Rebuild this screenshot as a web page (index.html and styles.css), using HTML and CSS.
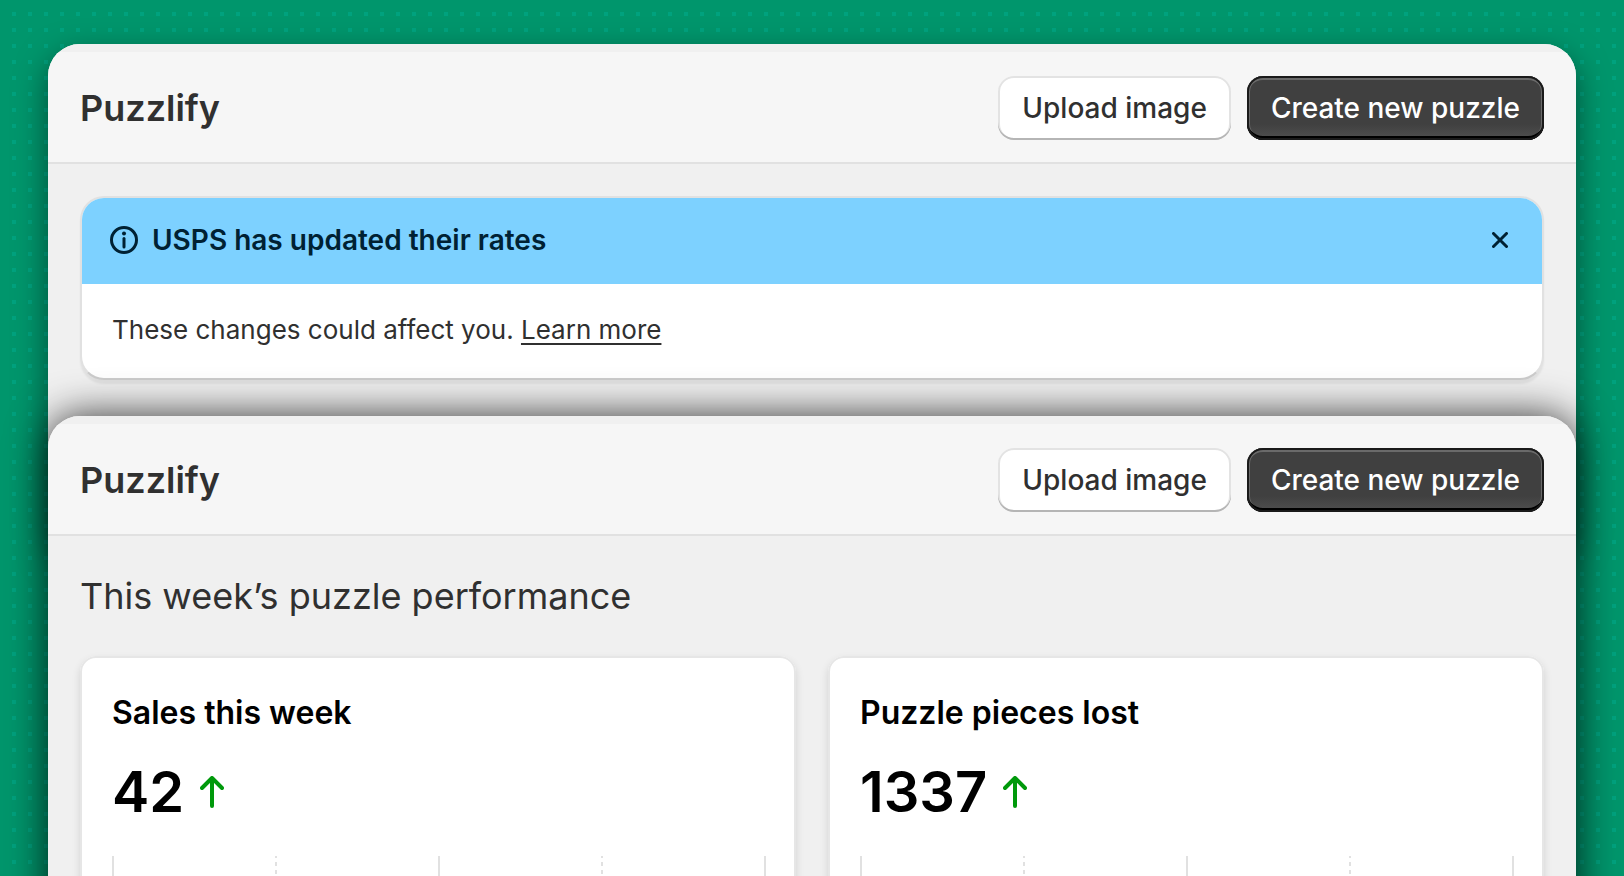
FILE: index.html
```html
<!DOCTYPE html>
<html lang="en">
<head>
  <meta charset="UTF-8" />
  <meta name="viewport" content="width=device-width, initial-scale=1.0" />
  <title>Puzzlify</title>
  <link rel="stylesheet" href="styles.css">
</head>
<body>
  <div class="stage">

    <!-- Window with the banner -->
    <section class="window window-back">
      <header class="title-bar">
        <h1>Puzzlify</h1>
        <div class="actions">
          <button type="button" class="btn">Upload image</button>
          <button type="button" class="btn btn-primary">Create new puzzle</button>
        </div>
      </header>
      <div class="content">
        <div class="banner">
          <div class="banner-head">
            <svg class="banner-icon" viewBox="0 0 28 28" aria-hidden="true">
              <circle cx="14" cy="14" r="12.5" fill="none" stroke="currentColor" stroke-width="3" />
              <path d="M14 12.500v8.500" fill="none" stroke="currentColor" stroke-width="3" stroke-linecap="round" />
              <circle cx="14" cy="7.500" r="2" fill="currentColor" />
            </svg>
            <h2>USPS has updated their rates</h2>
            <button type="button" class="banner-close" aria-label="Dismiss">
              <svg viewBox="0 0 16 16" aria-hidden="true">
                <path d="M1.500 1.500l13 13M14.500 1.500l-13 13" fill="none" stroke="currentColor" stroke-width="3" stroke-linecap="round" />
              </svg>
            </button>
          </div>
          <p class="banner-text">These changes could affect you. <a href="#">Learn more</a></p>
        </div>
      </div>
    </section>

    <!-- Window with the stats -->
    <section class="window window-front">
      <header class="title-bar">
        <h1>Puzzlify</h1>
        <div class="actions">
          <button type="button" class="btn">Upload image</button>
          <button type="button" class="btn btn-primary">Create new puzzle</button>
        </div>
      </header>
      <div class="content">
        <h2 class="section-title">This week’s puzzle performance</h2>
        <div class="cards">
          <article class="card">
            <h3>Sales this week</h3>
            <div class="stat">
              <span>42</span>
              <svg class="arrow" viewBox="0 0 24 32" aria-hidden="true">
                <path d="M12 30V3M2 12L12 2l10 10" fill="none" stroke="currentColor" stroke-width="4" stroke-linecap="round" stroke-linejoin="round" />
              </svg>
            </div>
            <svg class="chart" aria-hidden="true">
              <line x1="0" y1="0" x2="0" y2="100%" />
              <line class="dashed" x1="25%" y1="0" x2="25%" y2="100%" />
              <line x1="50%" y1="0" x2="50%" y2="100%" />
              <line class="dashed" x1="75%" y1="0" x2="75%" y2="100%" />
              <line x1="100%" y1="0" x2="100%" y2="100%" />
            </svg>
          </article>
          <article class="card">
            <h3>Puzzle pieces lost</h3>
            <div class="stat">
              <span>1337</span>
              <svg class="arrow" viewBox="0 0 24 32" aria-hidden="true">
                <path d="M12 30V3M2 12L12 2l10 10" fill="none" stroke="currentColor" stroke-width="4" stroke-linecap="round" stroke-linejoin="round" />
              </svg>
            </div>
            <svg class="chart" aria-hidden="true">
              <line x1="0" y1="0" x2="0" y2="100%" />
              <line class="dashed" x1="25%" y1="0" x2="25%" y2="100%" />
              <line x1="50%" y1="0" x2="50%" y2="100%" />
              <line class="dashed" x1="75%" y1="0" x2="75%" y2="100%" />
              <line x1="100%" y1="0" x2="100%" y2="100%" />
            </svg>
          </article>
        </div>
      </div>
    </section>

  </div>
</body>
</html>
```
FILE: styles.css
```css
* {
  box-sizing: border-box;
}
body {
  margin: 0;
  font-family: Inter, "Liberation Sans", sans-serif;
  color: #303030;
  background-color: #00966c;
  /* dotted backdrop */
  background-image: conic-gradient(from 270deg at 4px 4px, #00a27e 90deg, transparent 0);
  background-size: 16px 16px;
  background-position: 12px 12px;
}
h1, h2, h3, p {
  margin: 0;
}
.stage {
  height: 100vh;
  padding: 44px 48px 0;
  overflow: hidden;
}
.window {
  background: #f0f0f0;
  border-radius: 32px;
}
.window-back {
  padding-bottom: 140px;
  box-shadow: 0 12px 32px rgba(0, 0, 0, 0.5);
}
.window-front {
  position: relative;
  margin-top: -136px;
  box-shadow: 0 0 40px rgba(0, 0, 0, 0.8);
}
.title-bar {
  display: flex;
  align-items: center;
  justify-content: space-between;
  padding: 32px 32px 22px;
  border-bottom: 2px solid #e1e1e1;
  border-radius: 32px 32px 0 0;
  background: linear-gradient(#f0f0f0 8px, #f6f6f6 8px);
}
.title-bar h1 {
  font-size: 36px;
  line-height: 48px;
  font-weight: 600;
}
.actions {
  display: flex;
  gap: 16px;
}
.btn {
  height: 64px;
  padding: 0 24px;
  border: 0;
  border-radius: 16px;
  font-family: inherit;
  font-size: 28px;
  font-weight: 500;
  color: #303030;
  background: #fff;
  box-shadow: inset 0 -2px 0 #b5b5b5, inset 0 0 0 2px #e3e3e3;
  cursor: pointer;
}
.btn-primary {
  color: #fff;
  background: linear-gradient(#404040 75%, #505050);
  box-shadow: inset 0 0 0 2px #1a1a1a, inset 0 -4px 0 #000, inset 0 4px 0 #6a6a6a, inset 0 0 0 3px #6a6a6a;
}
.content {
  padding: 32px;
}
.banner {
  border: 2px solid #e1e1e1;
  border-bottom-color: #ccc;
  border-radius: 24px;
  background: #fff;
  overflow: hidden;
  box-shadow: 0 4px 2px rgba(0, 0, 0, 0.06);
}
.banner-head {
  display: flex;
  align-items: center;
  gap: 14px;
  height: 86px;
  padding: 0 28px 2px;
  color: #002133;
  background: #7dd1ff;
}
.banner-head h2 {
  flex: 1;
  font-size: 28px;
  line-height: 40px;
  font-weight: 600;
}
.banner-icon {
  width: 28px;
  height: 28px;
}
.banner-close {
  display: flex;
  padding: 6px;
  border: 0;
  color: inherit;
  background: none;
  cursor: pointer;
}
.banner-close svg {
  width: 16px;
  height: 16px;
}
.banner-text {
  padding: 26px 30px 28px;
  font-size: 26px;
  line-height: 40px;
}
.banner-text a {
  color: inherit;
  text-underline-offset: 4px;
  text-decoration-thickness: 2px;
}
.section-title {
  padding: 4px 0;
  font-size: 36px;
  line-height: 48px;
  font-weight: 400;
}
.cards {
  display: grid;
  grid-template-columns: 1fr 1fr;
  gap: 32px;
  margin-top: 32px;
}
.card {
  padding: 32px;
  border-radius: 16px;
  color: #000;
  background: #fff;
  box-shadow: inset 0 0 0 2px #e6e6e6, 0 4px 8px rgba(0, 0, 0, 0.12);
}
.card h3 {
  font-size: 32px;
  line-height: 50px;
  font-weight: 600;
}
.stat {
  display: flex;
  align-items: center;
  gap: 16px;
  margin-top: 22px;
  font-size: 56px;
  line-height: 64px;
  font-weight: 600;
}
.arrow {
  width: 24px;
  height: 32px;
  color: #00990b;
}
.chart {
  display: block;
  width: 100%;
  height: 240px;
  margin: 32px 0 0 1px;
  overflow: visible;
}
.chart line {
  stroke: #e1e1e1;
  stroke-width: 2;
}
.chart .dashed {
  stroke-dasharray: 4 4;
  stroke-dashoffset: 2;
}
```
